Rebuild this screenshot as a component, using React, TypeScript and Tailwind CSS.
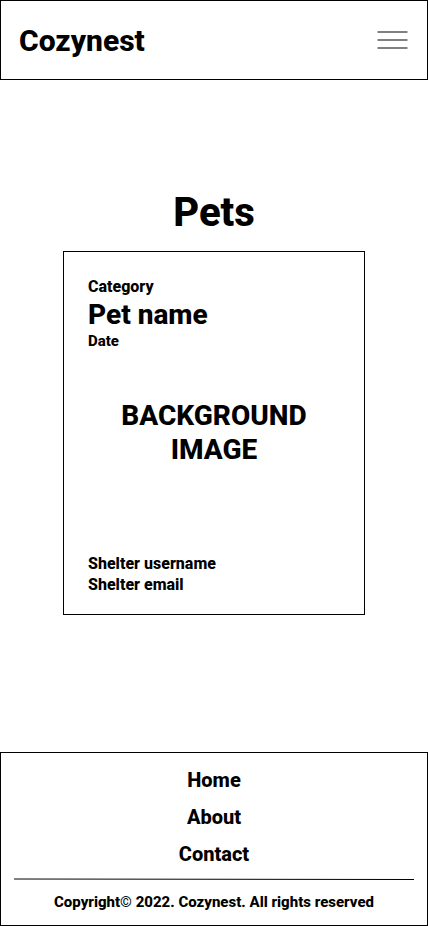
const links = ["Home", "About", "Contact"];

export default function App() {
  return (
    <div className="flex min-h-screen flex-col bg-white font-['Roboto',sans-serif] font-extrabold text-black">
      <header className="flex h-20 items-center justify-between border border-black px-[18px]">
        <a href="#" className="text-[30px] leading-9 pt-0.5">Cozynest</a>
        <button type="button" aria-label="Open menu">
          <svg width="32" height="20" viewBox="0 0 32 20" fill="none" stroke="#808080" strokeWidth="2">
            <path d="M0.5 2H30.5M0.5 10H30.5M0.5 18H30.5" />
          </svg>
        </button>
      </header>

      <main className="flex grow flex-col items-center px-4 pt-27 pb-34">
        <h1 className="text-[40px] leading-[50px]">Pets</h1>
        <article className="mt-[13px] flex min-h-[364px] w-full max-w-[302px] flex-col border border-black px-6 pt-6 pb-[19px]">
          <p className="text-base leading-[21px]">Category</p>
          <h2 className="text-[28px] leading-9">Pet name</h2>
          <p className="text-[15px] leading-4">Date</p>
          <p className="mt-[50px] mb-auto text-center text-[28px] leading-[34px]">
            BACKGROUND
            <br />
            IMAGE
          </p>
          <p className="text-base leading-[21px]">Shelter username</p>
          <p className="text-base leading-[21px]">Shelter email</p>
        </article>
      </main>

      <footer className="border border-black px-[13px] pt-[9px] pb-[13px] text-center">
        <nav aria-label="Footer" className="flex flex-col items-center pb-[5px] text-xl leading-[37px]">
          {links.map((name) => (
            <a key={name} href="#">{name}</a>
          ))}
        </nav>
        <svg className="block h-[2px] w-full" viewBox="0 0 400 2" preserveAspectRatio="none" aria-hidden="true">
          <path d="M0 1L400 1.5" stroke="black" strokeWidth="1" />
        </svg>
        <p className="pt-3 text-[15px] leading-5">
          Copyright<span className="font-normal">©</span> 2022. Cozynest. All rights reserved
        </p>
      </footer>
    </div>
  );
}
